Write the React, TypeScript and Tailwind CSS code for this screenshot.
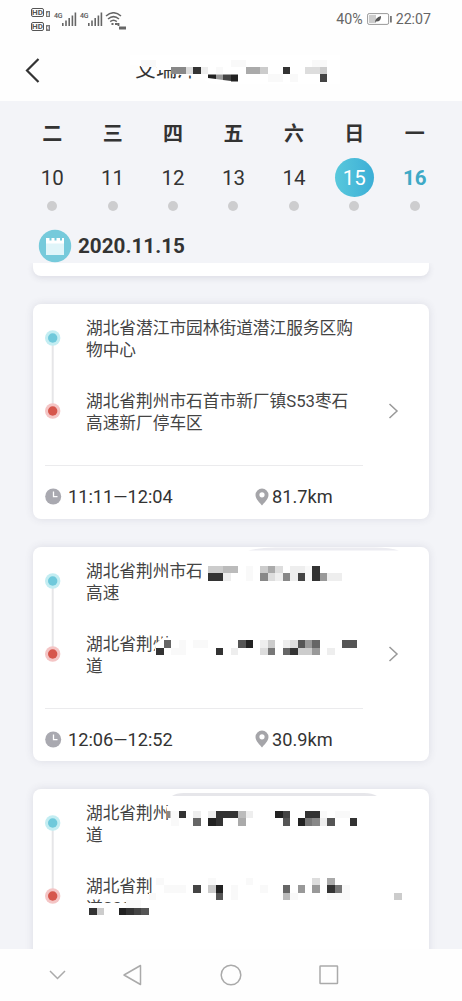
import { ReactNode } from 'react';
import clsx from 'clsx';

interface MosaicRow {
  row: number;
  col: number;
  cells: string;
}

interface Trip {
  from: string[];
  to: string[];
  time?: string;
  distance?: string;
  arrow?: boolean;
  overlay?: ReactNode;
}

const CELL = 7.44;

// every character is one cell: a hex digit for the grey level, a dot for an empty cell
function Mosaic({ rows }: { rows: MosaicRow[] }) {
  return (
    <g shapeRendering="crispEdges">
      {rows.map(({ row, col, cells }) =>
        cells.split('').map((c, i) =>
          c === '.' ? null : (
            <rect
              key={`${row}-${i}`}
              x={(col + i) * CELL}
              y={row * CELL}
              width={CELL}
              height={CELL}
              fill={c === 'f' ? '#f9f9f9' : `#${c}${c}${c}`}
            />
          )
        )
      )}
    </g>
  );
}

const days = [
  { name: '二', date: 10 },
  { name: '三', date: 11 },
  { name: '四', date: 12 },
  { name: '五', date: 13 },
  { name: '六', date: 14 },
  { name: '日', date: 15 },
  { name: '一', date: 16 },
];

const trips: Trip[] = [
  {
    from: ['湖北省潜江市园林街道潜江服务区购', '物中心'],
    to: ['湖北省荆州市石首市新厂镇S53枣石', '高速新厂停车区'],
    time: '11:11—12:04',
    distance: '81.7km',
    arrow: true,
  },
  {
    from: ['湖北省荆州市石', '高速'],
    to: ['湖北省荆州', '道'],
    time: '12:06—12:52',
    distance: '30.9km',
    arrow: true,
    overlay: (
      <svg className="absolute inset-0" width="396" height="214.5" viewBox="33 546.5 396 214.5">
        <path d="M248 550Q260 547 275 547H375Q390 547 399 550Z" fill="#ececf1" />
        <path d="M202 560H345V582H199L202 574Z" fill="#fff" />
        <path d="M154 655L156 643L163 637H362V657H154Z" fill="#fff" />
        <Mosaic
          rows={[
            { row: 76, col: 28, cells: 'ccbb.f.cad.eef3' },
            { row: 77, col: 28, cells: '33e..f.8de8e4f39ee' },
            { row: 86, col: 21, cells: '.6.f.ff....52.ec.ed596...55' },
            { row: 87, col: 21, cells: '3.ff....3.e...d7.63cc9.e' },
          ]}
        />
      </svg>
    ),
  },
  {
    from: ['湖北省荆州', '道'],
    to: ['湖北省荆', '道S32'],
    overlay: (
      <svg className="absolute inset-0" width="396" height="214.5" viewBox="33 789 396 214.5">
        <path d="M172 796Q176 793 184 793H364Q372 793 377 796Z" fill="#e6e6ea" />
        <path d="M166 806H365V826H170Z" fill="#fff" />
        <path d="M84 903H132V918H84Z" fill="#fff" />
        <Mosaic
          rows={[
            { row: 109, col: 22, cells: '.f3.e.e333be...24..33f.ff' },
            { row: 110, col: 22, cells: '.f..6.23..a.....5.278e5..3' },
            { row: 118, col: 21, cells: 'f......f....f........d.a' },
            { row: 119, col: 22, cells: 'fff.4.c2.f...f..6.9.9.37f' },
            { row: 120, col: 20, cells: 'f........5.f......bf....fff......c' },
            { row: 121, col: 17, cells: 'ff' },
            { row: 122, col: 12, cells: '3c..2345' },
          ]}
        />
        <rect x="167" y="811" width="3.5" height="7" fill="#888" />
      </svg>
    ),
  },
];

function HdBadge({ sim }: { sim: number }) {
  return (
    <div className="flex items-end gap-[2px]">
      <span className="flex h-[9px] w-[13px] items-center justify-center rounded-[2px] border border-[#555] text-[8px] leading-none font-bold text-[#555]">
        HD
      </span>
      <span className="flex h-[6px] w-[4px] items-center justify-center border border-[#777] text-[5px] leading-none text-[#555]">
        {sim}
      </span>
    </div>
  );
}

function Signal() {
  return (
    <div className="flex">
      <span className="h-3 w-[8px] text-[7px] leading-[9px] font-medium tracking-tighter text-[#555]">4G</span>
      <svg width="15" height="14" viewBox="0 0 15 14" fill="#666">
        <rect x="0" y="11" width="1.6" height="3" />
        <rect x="3.2" y="8.5" width="1.6" height="5.5" />
        <rect x="6.4" y="6" width="1.6" height="8" />
        <rect x="9.6" y="3.5" width="1.6" height="10.5" />
        <rect x="12.6" y="0.5" width="1.6" height="13.5" />
      </svg>
    </div>
  );
}

function StatusBar() {
  return (
    <div className="flex h-10 items-start justify-between pl-[31px] pr-[31px] text-[#666]">
      <div className="flex">
        <div className="flex flex-col gap-[5px] pt-2">
          <HdBadge sim={1} />
          <HdBadge sim={2} />
        </div>
        <div className="flex gap-[3px] pl-1 pt-3">
          <Signal />
          <Signal />
        </div>
        <svg className="ml-[2px] mt-3" width="22" height="18" viewBox="0 0 22 18" fill="none" stroke="#666" strokeWidth="1.5">
          <path d="M1 4Q8.500 -2.500 16 4" />
          <path d="M3 7Q8.500 2.300 14 7" />
          <path d="M5.200 9.700Q8.500 7 11.800 9.700" />
          <path d="M6.500 12H8.500M10 12H12.500M13.500 11V14" strokeWidth="1.800" />
          <rect x="14" y="14.500" width="7" height="3" fill="#666" stroke="none" />
        </svg>
      </div>
      <div className="flex items-center pt-[9px] text-[14.200px] leading-[20px]">
        <span>40%</span>
        <svg className="ml-[4px] mr-[4px]" width="25" height="12" viewBox="0 0 25 12">
          <rect x="0.6" y="0.6" width="21" height="10.800" rx="1.500" fill="#fff" stroke="#999" />
          <rect x="2" y="2" width="7" height="8" fill="#ccc" />
          <path d="M8 9.500Q8 4.500 14 3Q14.500 8.500 9 8.500Z" fill="#555" />
          <rect x="23" y="3" width="1.800" height="6.500" fill="#777" />
        </svg>
        <span>22:07</span>
      </div>
    </div>
  );
}

function Header() {
  return (
    <header className="relative flex h-[61px] items-center">
      <svg className="ml-[25px]" width="16" height="26" viewBox="0 0 16 26" fill="none" stroke="#333" strokeWidth="2.200">
        <path d="M13.500 1L2 12.500L13.500 24" />
      </svg>
      <h1 className="ml-[94px] pb-[3px] text-[21px] leading-none text-[#333]">艾瑞泽</h1>
      <svg className="absolute left-[130px] top-0" width="210" height="61" viewBox="130 40 210 61">
        <path d="M130 55H340V84H212L197 76L180 75L174 70H158L155 65H130Z" fill="#fff" />
        <Mosaic
          rows={[
            { row: 8, col: 19, cells: 'ff..........ff.........ff' },
            { row: 9, col: 23, cells: '88d3e.f...aac..3..ddc' },
            { row: 10, col: 36, cells: 'ff.f...4' },
          ]}
        />
        <path d="M208 74.500H216V79L208 78Z" fill="#222" />
        <path d="M216 74.500H223V80L216 79Z" fill="#999" />
        <path d="M223 74.500H231V81L223 80Z" fill="#444" />
        <rect x="231" y="74.500" width="7" height="7" fill="#222" />
      </svg>
    </header>
  );
}

function WeekStrip() {
  return (
    <div className="grid grid-cols-7 pl-[22px] pr-[17px] pt-[20px]">
      {days.map(({ name, date }) => (
        <div key={date} className="flex flex-col items-center">
          <span className="text-[20px] leading-[26px] font-bold text-[#333]">{name}</span>
          <span
            className={clsx(
              'mt-[11px] flex h-[39px] w-[39px] items-center justify-center rounded-full pt-px text-[20.500px] leading-none',
              date === 15 && 'bg-linear-to-r from-[#58c8dc] to-[#3caed6] text-white',
              date === 16 && 'font-bold text-[#3ea9c6]',
              date < 15 && 'text-[#333]'
            )}
          >
            {date}
          </span>
          <span className="mt-[4px] h-[10px] w-[10px] rounded-full bg-[#cdcdcf]" />
        </div>
      ))}
    </div>
  );
}

function Stop({ lines }: { lines: string[] }) {
  return (
    <p className="text-[16.700px] leading-[22px] whitespace-nowrap text-[#444]">
      {lines.map((line) => (
        <span key={line} className="block">
          {line}
        </span>
      ))}
    </p>
  );
}

function TripCard({ trip }: { trip: Trip }) {
  return (
    <article className="relative h-[214.500px] shrink-0 rounded-lg bg-white shadow-[0_0_8px_rgba(60,60,90,0.12)]">
      <div className="flex h-[161px]">
        <svg className="ml-[11px] mt-[25px] shrink-0" width="18" height="92" viewBox="0 0 18 92">
          <path d="M8.700 16V76" stroke="#e6e6e8" strokeWidth="2" />
          <circle cx="8.700" cy="9" r="7.700" fill="#c3edf2" />
          <circle cx="8.700" cy="9" r="4.700" fill="#6fc9db" />
          <circle cx="8.700" cy="82" r="7.700" fill="#f4c5c5" />
          <circle cx="8.700" cy="82" r="4.700" fill="#d6564c" />
        </svg>
        <div className="ml-[24px] flex w-[277px] flex-col gap-[29px] pt-[14px]">
          <Stop lines={trip.from} />
          <Stop lines={trip.to} />
        </div>
        {trip.arrow && (
          <svg className="ml-[25px] mt-[99px]" width="11" height="16" viewBox="0 0 11 16" fill="none" stroke="#999" strokeWidth="1.500">
            <path d="M1.500 1L9 8L1.500 15" />
          </svg>
        )}
      </div>
      {trip.time && (
        <>
          <div className="ml-[12px] h-px w-[318px] bg-[#ebebed]" />
          <div className="ml-[12px] mt-[19px] flex items-center text-[18.200px] leading-[22px] text-[#333]">
            <svg width="17" height="17" viewBox="0 0 17 17">
              <circle cx="8.200" cy="8.500" r="8" fill="#a9a9b0" />
              <path d="M8.500 3.500V8.700H12.500" fill="none" stroke="#fff" strokeWidth="1.300" />
            </svg>
            <span className="ml-[6px] w-[187px] pt-px">{trip.time}</span>
            <svg width="14" height="18" viewBox="0 0 14 18">
              <path
                d="M7 0.500A6.500 6.500 0 0 0 0.500 7C0.500 11 5 15 7 17.500C9 15 13.500 11 13.500 7A6.500 6.500 0 0 0 7 0.500ZM7 4.200A2.600 2.600 0 1 1 7 9.400A2.600 2.600 0 1 1 7 4.200Z"
                fill="#a5a5a9"
                fillRule="evenodd"
              />
            </svg>
            <span className="ml-[3px] pt-px">{trip.distance}</span>
          </div>
        </>
      )}
      {trip.overlay}
    </article>
  );
}

function NavBar() {
  return (
    <nav className="flex h-[52px] items-center bg-[#fefefe] pl-[49px]">
      <svg width="17" height="10" viewBox="0 0 17 10" fill="none" stroke="#aaa" strokeWidth="1.500">
        <path d="M1 1L8.500 8.500L16 1" />
      </svg>
      <svg className="ml-[56px]" width="20" height="22" viewBox="0 0 20 22" fill="none" stroke="#aaa" strokeWidth="1.500" strokeLinejoin="round">
        <path d="M18.500 1.500V20.500L2 11Z" />
      </svg>
      <svg className="ml-[78px]" width="22" height="22" viewBox="0 0 22 22" fill="none" stroke="#aaa" strokeWidth="1.500">
        <circle cx="11" cy="11" r="9.800" />
      </svg>
      <svg className="ml-[77px]" width="20" height="20" viewBox="0 0 20 20" fill="none" stroke="#aaa" strokeWidth="1.500">
        <rect x="1" y="1" width="17.500" height="17.500" rx="0.500" />
      </svg>
    </nav>
  );
}

export default function App() {
  return (
    <div className="flex h-[1001px] w-[462px] flex-col overflow-hidden bg-[#fefefe] font-[Roboto,'Noto_Sans_CJK_SC',sans-serif]">
      <StatusBar />
      <Header />
      <main className="flex h-[848px] flex-col overflow-hidden bg-[#f3f4f8]">
        <WeekStrip />
        <div className="flex h-[34px] shrink-0 items-center pl-[38px] mt-[18px]">
          <svg width="34" height="34" viewBox="0 0 34 34">
            <circle cx="17" cy="17" r="16.200" fill="#76cadb" />
            <path d="M8 9H11.500V11.500H13.500V9H16.500V11.500H18.500V9H22V11.500H24V9H26V15H8Z" fill="#fff" />
            <rect x="8" y="14.500" width="18" height="11.500" fill="#e0f5f9" />
          </svg>
          <span className="ml-[6px] pt-px text-[20.700px] leading-none font-bold text-[#333]">2020.11.15</span>
        </div>
        <div className="flex min-h-0 flex-1 flex-col gap-7 overflow-hidden pl-[33px] pr-[33px]">
          <div className="h-[13px] shrink-0 rounded-b-lg bg-white shadow-[0_2px_6px_rgba(60,60,90,0.12)]" />
          {trips.map((trip, i) => (
            <TripCard key={i} trip={trip} />
          ))}
        </div>
      </main>
      <NavBar />
    </div>
  );
}
